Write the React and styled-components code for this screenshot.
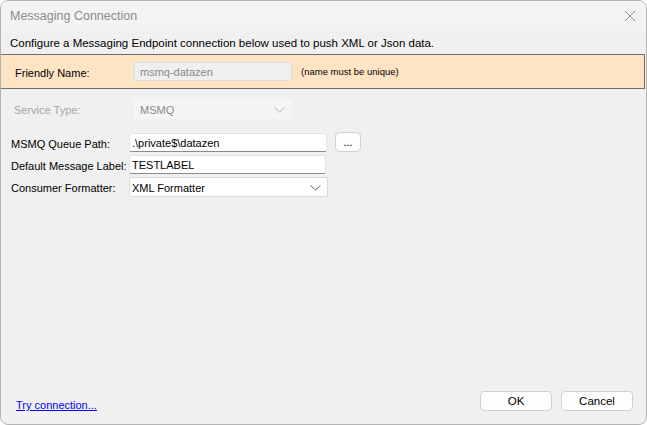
import React from 'react';
import styled, { createGlobalStyle } from 'styled-components';

const GlobalStyle = createGlobalStyle`
  html, body {
    margin: 0;
    padding: 0;
    background: #ffffff;
  }
  body {
    font-family: 'Liberation Sans', Arial, sans-serif;
    font-size: 11.5px;
    color: #000;
  }
`;

const Window = styled.div`
  width: 647px;
  height: 425px;
  box-sizing: border-box;
  border: 1px solid #b4b4b4;
  border-radius: 8px;
  background: #f0f0f0;
  display: flex;
  flex-direction: column;
  overflow: hidden;
`;

const TitleBar = styled.div`
  height: 30px;
  flex: none;
  display: flex;
  align-items: center;
  justify-content: space-between;
  padding: 0 9px 0 9px;
  background: #f3f3f3;
  color: #8c8c8c;
  font-size: 12.5px;
`;

const CloseButton = styled.div`
  width: 14px;
  height: 14px;
  display: flex;
  align-items: center;
  justify-content: center;
`;

const Description = styled.div`
  height: 23px;
  flex: none;
  display: flex;
  align-items: center;
  padding-left: 9px;
  font-size: 11.5px;
`;

const HighlightPanel = styled.div`
  height: 33px;
  flex: none;
  margin-right: 1px;
  background: #ffe4c4;
  border-top: 1px solid #6e6e6e;
  border-bottom: 1px solid #6e6e6e;
  border-right: 1px solid #6e6e6e;
  display: flex;
  align-items: center;
`;

const Form = styled.div`
  display: flex;
  flex-direction: column;
  padding-top: 10px;
`;

const Row = styled.div`
  display: flex;
  align-items: center;
  height: ${(p) => p.$h || 20}px;
  margin-bottom: ${(p) => p.$gap || 0}px;
  padding-left: ${(p) => p.$pad || 10}px;
`;

const Label = styled.div`
  width: ${(p) => p.$w}px;
  flex: none;
  padding-top: 2px;
  color: ${(p) => (p.$disabled ? '#a6a6a6' : '#000')};
  font-size: 11px;
  white-space: nowrap;
`;

const TextBox = styled.div`
  width: ${(p) => p.$w}px;
  height: ${(p) => p.$h || 19}px;
  box-sizing: border-box;
  display: flex;
  align-items: center;
  padding-left: ${(p) => (p.$disabled ? 5 : 2)}px;
  padding-top: 1px;
  background: ${(p) => (p.$disabled ? '#efefef' : '#ffffff')};
  border: 1px solid ${(p) => (p.$disabled ? '#dcdcdc' : '#e3e3e3')};
  border-bottom-color: ${(p) => (p.$disabled ? '#dcdcdc' : '#8a8a8a')};
  border-radius: 2px;
  color: ${(p) => (p.$disabled ? '#8a8a8a' : '#000')};
  font-size: 11px;
  white-space: nowrap;
`;

const Select = styled.div`
  width: ${(p) => p.$w}px;
  height: 20px;
  box-sizing: border-box;
  display: flex;
  align-items: center;
  justify-content: space-between;
  padding: 1px 6px 0 ${(p) => (p.$disabled ? 5 : 2)}px;
  background: ${(p) => (p.$disabled ? '#f5f5f5' : '#ffffff')};
  border: 1px solid ${(p) => (p.$disabled ? '#f5f5f5' : '#dadada')};
  border-radius: 2px;
  color: ${(p) => (p.$disabled ? '#8a8a8a' : '#000')};
  font-size: 11px;
`;

const Hint = styled.div`
  margin-left: 9px;
  font-size: 9.5px;
  color: #000;
`;

const SmallButton = styled.div`
  width: 26px;
  height: 20px;
  box-sizing: border-box;
  margin-left: 8px;
  margin-top: -2px;
  border: 1px solid #d0d0d0;
  border-radius: 4px;
  background: #fdfdfd;
  display: flex;
  align-items: center;
  justify-content: center;
  font-size: 11px;
  color: #000;
  padding-top: 1px;
`;

const Spacer = styled.div`
  flex: 1;
`;

const Footer = styled.div`
  height: 33px;
  flex: none;
  display: flex;
  align-items: flex-start;
  justify-content: space-between;
  padding: 0 13px 0 15px;
`;

const Link = styled.a`
  color: #0000ff;
  text-decoration: underline;
  font-size: 11px;
  margin-top: 8px;
  cursor: pointer;
`;

const Buttons = styled.div`
  display: flex;
  gap: 9px;
`;

const Button = styled.div`
  width: 72px;
  height: 20px;
  box-sizing: border-box;
  border: 1px solid #d0d0d0;
  border-radius: 4px;
  background: #fdfdfd;
  display: flex;
  align-items: center;
  justify-content: center;
  font-size: 11.5px;
`;

const Chevron = ({ color }) => (
  <svg width="11" height="6" viewBox="0 0 11 6">
    <path d="M0.5 0.5 L5.5 5 L10.5 0.5" fill="none" stroke={color} strokeWidth="1" />
  </svg>
);

const App = () => (
  <>
    <GlobalStyle />
    <Window>
      <TitleBar>
        <span>Messaging Connection</span>
        <CloseButton>
          <svg width="12" height="12" viewBox="0 0 12 12">
            <path d="M1 1 L11 11 M11 1 L1 11" stroke="#8a8a8a" strokeWidth="1" />
          </svg>
        </CloseButton>
      </TitleBar>
      <Description>
        Configure a Messaging Endpoint connection below used to push XML or Json data.
      </Description>
      <HighlightPanel>
        <Row $pad={14}>
          <Label $w={119}>Friendly Name:</Label>
          <TextBox $w={158} $disabled>
            msmq-datazen
          </TextBox>
          <Hint>(name must be unique)</Hint>
        </Row>
      </HighlightPanel>
      <Form>
        <Row $pad={13} $gap={14}>
          <Label $w={120} $disabled>
            Service Type:
          </Label>
          <Select $w={158} $disabled>
            <span>MSMQ</span>
            <Chevron color="#b5b5b5" />
          </Select>
        </Row>
        <Row $pad={10} $h={19} $gap={3}>
          <Label $w={118}>MSMQ Queue Path:</Label>
          <TextBox $w={198}>.\private$\datazen</TextBox>
          <SmallButton>...</SmallButton>
        </Row>
        <Row $pad={10} $h={19} $gap={3}>
          <Label $w={118}>Default Message Label:</Label>
          <TextBox $w={197}>TESTLABEL</TextBox>
        </Row>
        <Row $pad={10}>
          <Label $w={118}>Consumer Formatter:</Label>
          <Select $w={199}>
            <span>XML Formatter</span>
            <Chevron color="#606060" />
          </Select>
        </Row>
      </Form>
      <Spacer />
      <Footer>
        <Link>Try connection...</Link>
        <Buttons>
          <Button>OK</Button>
          <Button>Cancel</Button>
        </Buttons>
      </Footer>
    </Window>
  </>
);

export default App;
